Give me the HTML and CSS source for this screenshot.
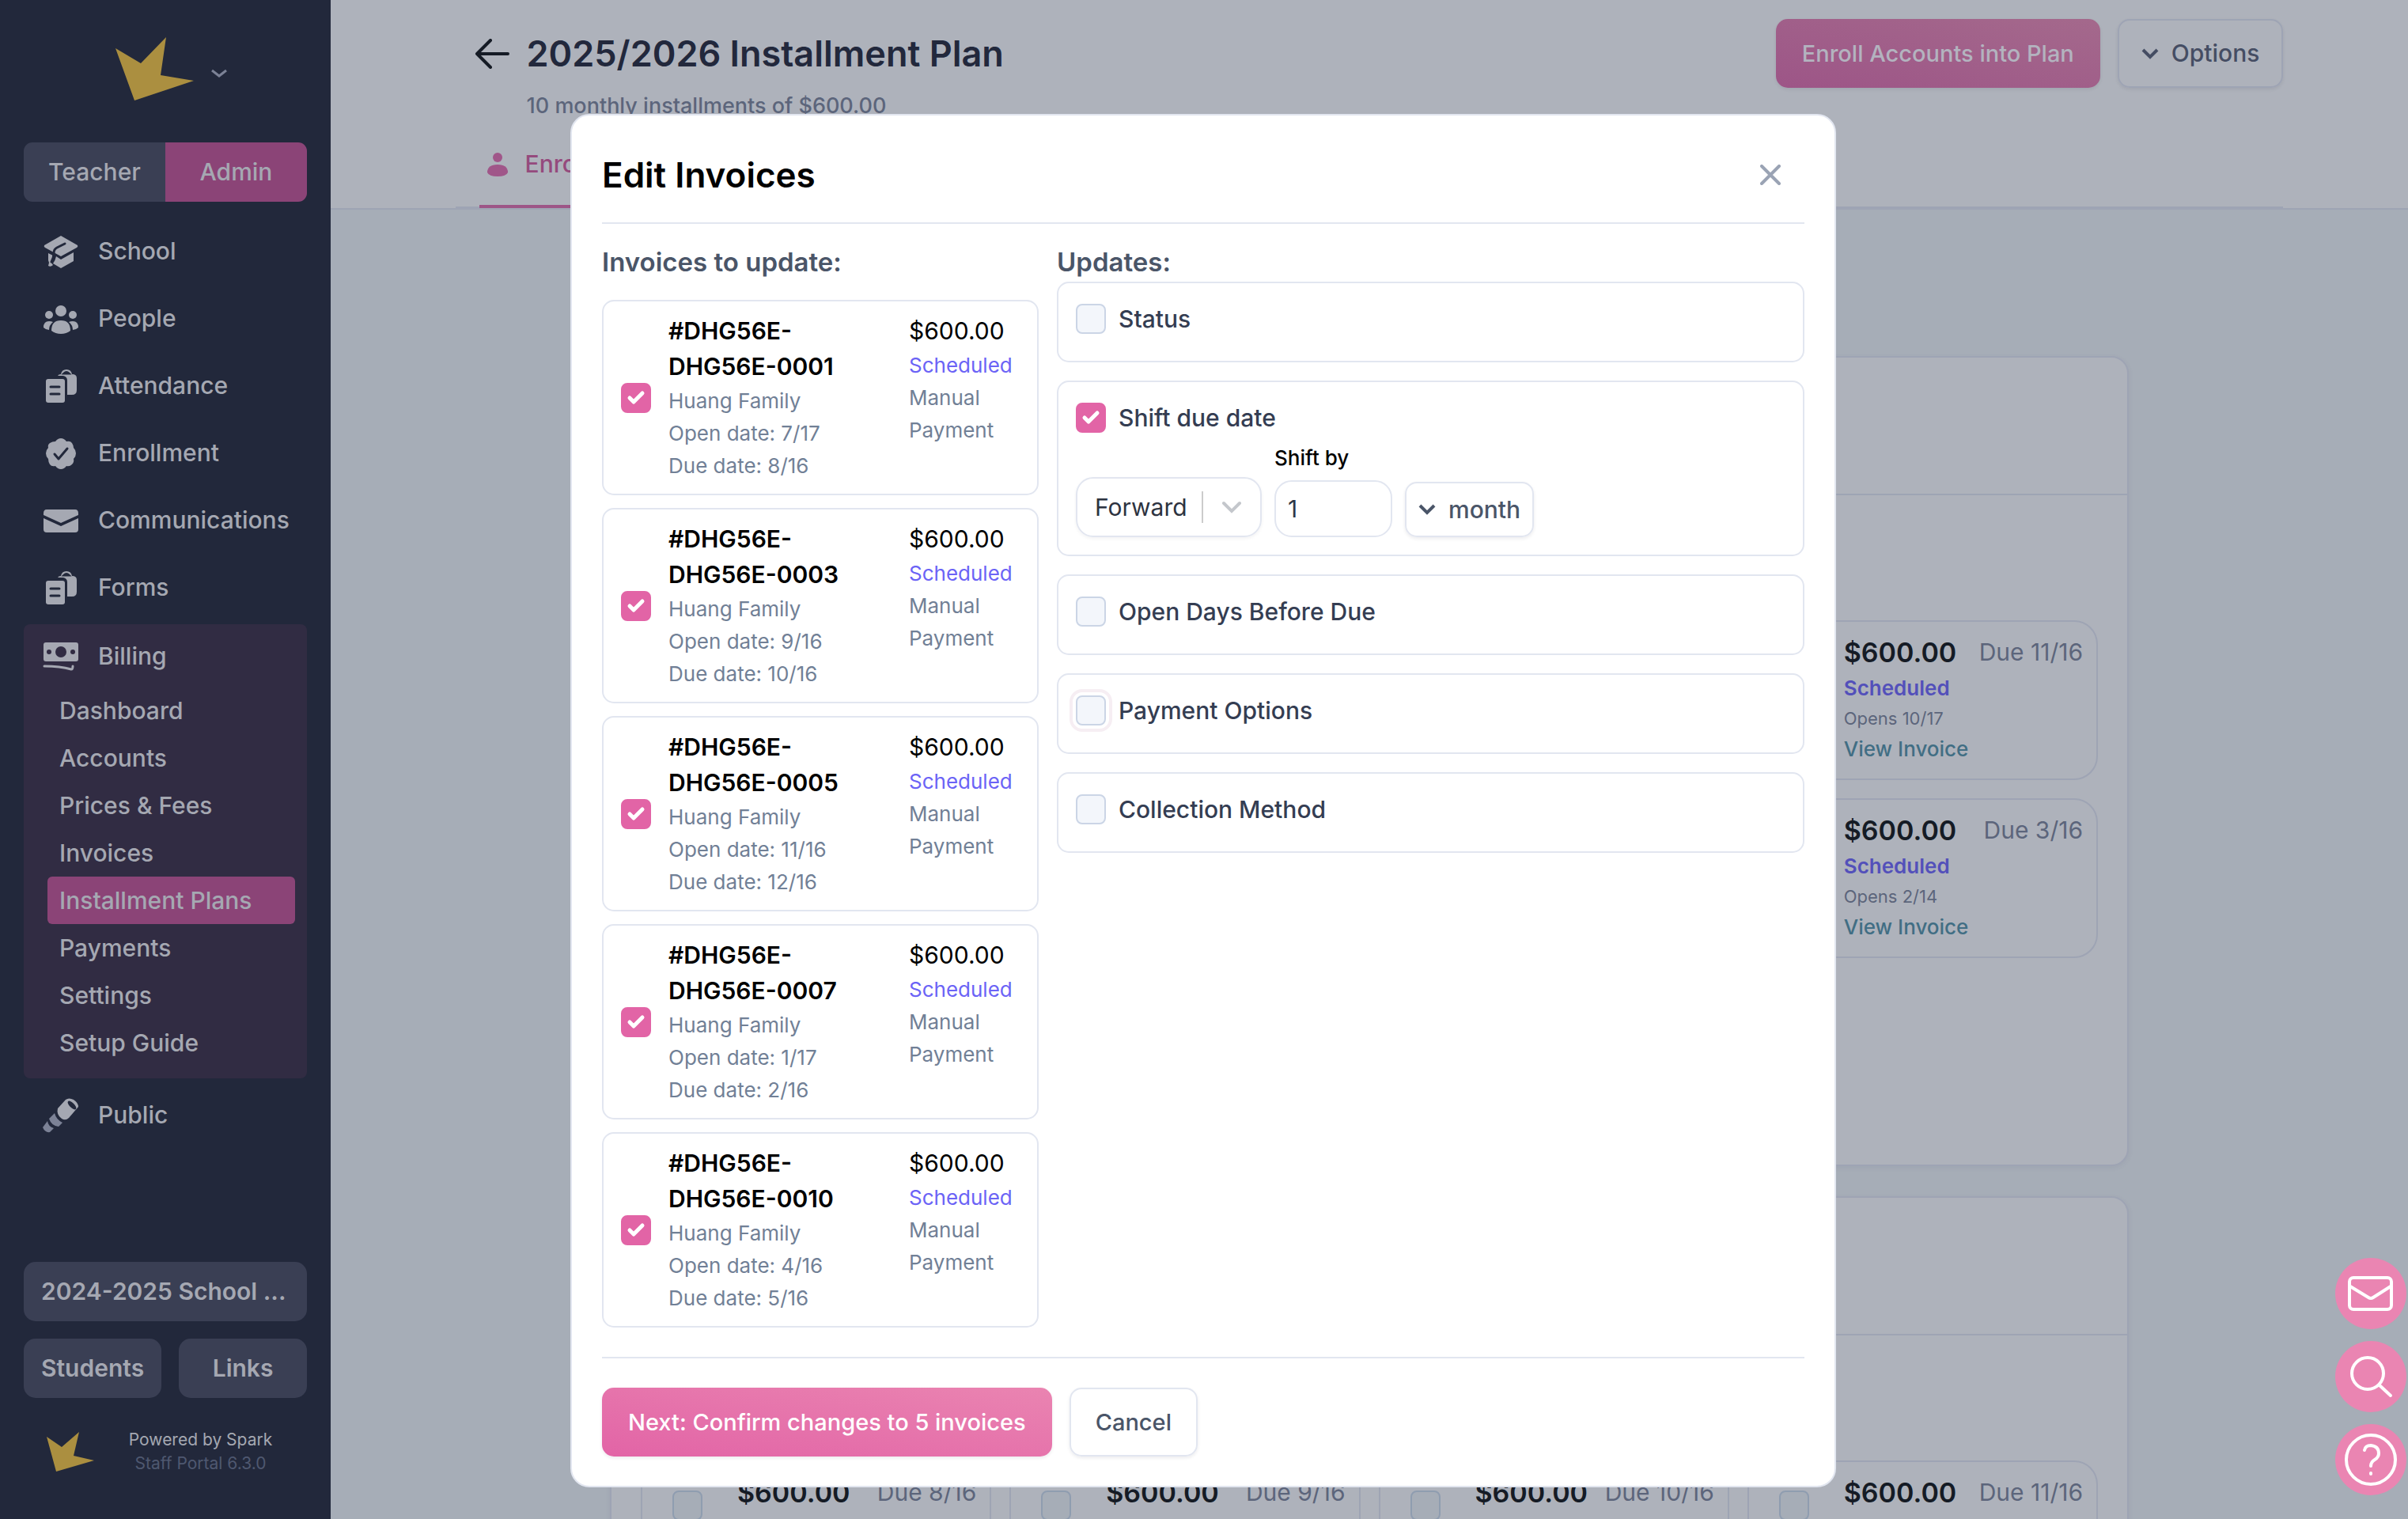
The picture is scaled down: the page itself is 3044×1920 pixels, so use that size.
FILE: index.html
```html
<!DOCTYPE html>
<html lang="en">
<head>
    <meta charset="UTF-8" />
    <meta name="viewport" content="width=device-width, initial-scale=1" />
    <title>2025/2026 Installment Plan</title>
    <link rel="stylesheet" href="styles.css">
</head>
<body>
    <aside class="sidebar">
        <button class="brand" aria-label="Switch school">
            <svg class="brand-logo" viewBox="0 0 100 80"><polygon points="1,14 33,33 65,0 58,48 100,55 25,80" fill="#ab8f40"/></svg>
            <svg class="brand-arrow" viewBox="0 0 20 12"><path d="M1 2l9 7 9-7" fill="none" stroke="#7c8296" stroke-width="3"/></svg>
        </button>

        <div class="role-switch">
            <button>Teacher</button>
            <button class="active">Admin</button>
        </div>

        <nav class="nav">
            <a class="nav-item" href="#">
                <svg viewBox="0 0 44 44">
                    <path d="M22 2L43 14Q44 16 42 17L22 28 2 17Q0 16 1 14z"/>
                    <path d="M16 28l6 4 16-9v11l-16 9-10-6q3-4 4-9zM6 24l6 3q0 5-3 8l3 4q-3 3-6 1l1-4-1-3z"/>
                    <path d="M27 12l-10 5q-4 2-4 7 0 6-3 11" fill="none" stroke="#22283b" stroke-width="3" stroke-linecap="round"/>
                </svg>
                School
            </a>
            <a class="nav-item" href="#">
                <svg viewBox="0 0 44 44">
                    <circle cx="22" cy="12" r="7"/><circle cx="7" cy="17" r="5"/><circle cx="37" cy="17" r="5"/>
                    <path d="M10 37q0-13 12-13t12 13q-5 4-12 4t-12-4zM0 33q0-8 7-8 3 0 5 1-5 4-5 10-4 0-7-3zM44 33q0-8-7-8-3 0-5 1 5 4 5 10 4 0 7-3z"/>
                </svg>
                People
            </a>
            <a class="nav-item" href="#">
                <svg viewBox="0 0 44 44">
                    <rect x="3" y="13" width="24" height="30" rx="3"/>
                    <path d="M18 9q1-2 4-2 1-6 7-6t7 6q6 0 6 5v15q0 6-6 6h-6V15q0-5-5-6z"/>
                    <path d="M26 6q3-3 6 0zM9 23h11M9 32h11" fill="none" stroke="#22283b" stroke-width="3" stroke-linecap="round"/>
                </svg>
                Attendance
            </a>
            <a class="nav-item" href="#">
                <svg viewBox="0 0 44 44">
                    <path d="M22 3q4 0 7 4 5-1 7 2t2 6q3 3 3 7t-3 7q1 4-2 7t-7 2q-3 4-7 4t-7-4q-5 1-7-2t-2-7q-3-3-3-7t3-7q-1-4 2-6t7-2q3-4 7-4z"/>
                    <path d="M14 23l5 6 11-13" fill="none" stroke="#22283b" stroke-width="3" stroke-linecap="round" stroke-linejoin="round"/>
                </svg>
                Enrollment
            </a>
            <a class="nav-item" href="#">
                <svg viewBox="0 0 44 44">
                    <path d="M4 8h36q4 0 4 5v2l-22 10L0 15v-2q0-5 4-5zM0 19l22 10 22-10v14q0 4-4 4H4q-4 0-4-4z"/>
                </svg>
                Communications
            </a>
            <a class="nav-item" href="#">
                <svg viewBox="0 0 44 44">
                    <rect x="3" y="13" width="24" height="30" rx="3"/>
                    <path d="M18 9q1-2 4-2 1-6 7-6t7 6q6 0 6 5v15q0 6-6 6h-6V15q0-5-5-6z"/>
                    <path d="M26 6q3-3 6 0zM9 23h11M9 32h11" fill="none" stroke="#22283b" stroke-width="3" stroke-linecap="round"/>
                </svg>
                Forms
            </a>
            <div class="nav-group">
                <a class="nav-item" href="#">
                    <svg viewBox="0 0 44 44">
                        <rect y="4" width="44" height="24" rx="3"/>
                        <path d="M1 34q20 0 34 4 2 0 2-4" fill="none" stroke="#a5a8b2" stroke-width="3" stroke-linecap="round"/>
                        <g fill="#312c43"><circle cx="22" cy="16" r="7"/><circle cx="7" cy="16" r="3"/><circle cx="37" cy="16" r="3"/></g>
                    </svg>
                    Billing
                </a>
                <a class="sub-item" href="#">Dashboard</a>
                <a class="sub-item" href="#">Accounts</a>
                <a class="sub-item" href="#">Prices &amp; Fees</a>
                <a class="sub-item" href="#">Invoices</a>
                <a class="sub-item active" href="#">Installment Plans</a>
                <a class="sub-item" href="#">Payments</a>
                <a class="sub-item" href="#">Settings</a>
                <a class="sub-item" href="#">Setup Guide</a>
            </div>
            <a class="nav-item" href="#">
                <svg viewBox="0 0 44 44">
                    <path d="M18 13L28 2q4-3 10 0 6 4 6 9l-12 14q-4 4-9 1-7-5-5-13z"/>
                    <ellipse cx="36" cy="9" rx="3" ry="7" transform="rotate(-45 36 9)" fill="#22283b"/>
                    <path d="M14 19q2 8 10 12l-5 5q-9-1-12-10zM5 29q1 7 8 9l-5 5q-6 1-9-6z" fill="#7c8296"/>
                </svg>
                Public
            </a>
        </nav>

        <div class="sidebar-bottom">
            <button class="side-btn year-btn">2024-2025 School ...</button>
            <div class="side-row">
                <button class="side-btn">Students</button>
                <button class="side-btn side-btn-grow">Links</button>
            </div>
            <div class="powered">
                <svg viewBox="0 0 60 50"><polygon points="0,6 19,19 41,0 34,30 60,36 12,50" fill="#ab8f40"/></svg>
                <div class="powered-text">
                    <div>Powered by Spark</div>
                    <div class="version">Staff Portal 6.3.0</div>
                </div>
            </div>
        </div>
    </aside>

    <main class="main">
        <header class="page-header">
            <div class="header-top">
                <a class="back" href="#" aria-label="Back">
                    <svg viewBox="0 0 44 38"><path d="M42 19H3M20 2L3 19l17 17" fill="none" stroke="#151b25" stroke-width="4" stroke-linecap="round" stroke-linejoin="round"/></svg>
                </a>
                <div class="header-text">
                    <h1>2025/2026 Installment Plan</h1>
                    <p>10 monthly installments of $600.00</p>
                </div>
                <div class="header-actions">
                    <button class="btn btn-primary-dim">Enroll Accounts into Plan</button>
                    <button class="btn btn-dim">
                        <svg viewBox="0 0 22 14"><path d="M2 2l9 9 9-9" fill="none" stroke="#454d63" stroke-width="4"/></svg>
                        Options
                    </button>
                </div>
            </div>
            <div class="tabs">
                <a class="tab" href="#">
                    <svg viewBox="0 0 26 30"><circle cx="13" cy="6" r="6"/><path d="M0 25q0-10 13-10t13 10q-2 5-13 5T0 25z"/></svg>
                    Enrolled
                </a>
            </div>
        </header>

        <div class="content">
            <section class="plan-card">
                <div class="plan-head"></div>
                <div class="installments">
                    <div class="installment"></div>
                    <div class="installment"></div>
                    <div class="installment"></div>
                    <div class="installment">
                        <input type="checkbox" aria-label="Select invoice due 11/16">
                        <div class="inst-body">
                            <div class="inst-top"><b>$600.00</b><span>Due 11/16</span></div>
                            <div class="inst-status">Scheduled</div>
                            <div class="inst-opens">Opens 10/17</div>
                            <a href="#">View Invoice</a>
                        </div>
                    </div>
                    <div class="installment"></div>
                    <div class="installment"></div>
                    <div class="installment"></div>
                    <div class="installment">
                        <input type="checkbox" aria-label="Select invoice due 3/16">
                        <div class="inst-body">
                            <div class="inst-top"><b>$600.00</b><span>Due 3/16</span></div>
                            <div class="inst-status">Scheduled</div>
                            <div class="inst-opens">Opens 2/14</div>
                            <a href="#">View Invoice</a>
                        </div>
                    </div>
                    <div class="installment"></div>
                    <div class="installment"></div>
                </div>
            </section>
            <section class="plan-card">
                <div class="plan-head"></div>
                <div class="installments">
                    <div class="installment">
                        <input type="checkbox" aria-label="Select invoice due 8/16">
                        <div class="inst-body">
                            <div class="inst-top"><b>$600.00</b><span>Due 8/16</span></div>
                        </div>
                    </div>
                    <div class="installment">
                        <input type="checkbox" aria-label="Select invoice due 9/16">
                        <div class="inst-body">
                            <div class="inst-top"><b>$600.00</b><span>Due 9/16</span></div>
                        </div>
                    </div>
                    <div class="installment">
                        <input type="checkbox" aria-label="Select invoice due 10/16">
                        <div class="inst-body">
                            <div class="inst-top"><b>$600.00</b><span>Due 10/16</span></div>
                        </div>
                    </div>
                    <div class="installment">
                        <input type="checkbox" aria-label="Select invoice due 11/16">
                        <div class="inst-body">
                            <div class="inst-top"><b>$600.00</b><span>Due 11/16</span></div>
                        </div>
                    </div>
                </div>
            </section>
        </div>
    </main>

    <div class="overlay">
        <div class="modal" role="dialog" aria-labelledby="modal-title">
            <div class="modal-head">
                <h2 id="modal-title">Edit Invoices</h2>
                <button class="close" aria-label="Close">
                    <svg viewBox="0 0 26 26"><path d="M2 2l22 22M24 2L2 24" fill="none" stroke="#9aa3b4" stroke-width="4" stroke-linecap="round"/></svg>
                </button>
            </div>
            <div class="modal-body">
                <section class="invoices">
                    <h3>Invoices to update:</h3>
                    <div class="invoice-list">
                        <label class="invoice">
                            <input type="checkbox" checked>
                            <span class="inv-main"><span class="inv-id">#DHG56E-DHG56E-0001</span><span>Huang Family</span><span>Open date: 7/17</span><span>Due date: 8/16</span></span>
                            <span class="inv-side"><span class="inv-amount">$600.00</span><span class="inv-status">Scheduled</span><span>Manual Payment</span></span>
                        </label>
                        <label class="invoice">
                            <input type="checkbox" checked>
                            <span class="inv-main"><span class="inv-id">#DHG56E-DHG56E-0003</span><span>Huang Family</span><span>Open date: 9/16</span><span>Due date: 10/16</span></span>
                            <span class="inv-side"><span class="inv-amount">$600.00</span><span class="inv-status">Scheduled</span><span>Manual Payment</span></span>
                        </label>
                        <label class="invoice">
                            <input type="checkbox" checked>
                            <span class="inv-main"><span class="inv-id">#DHG56E-DHG56E-0005</span><span>Huang Family</span><span>Open date: 11/16</span><span>Due date: 12/16</span></span>
                            <span class="inv-side"><span class="inv-amount">$600.00</span><span class="inv-status">Scheduled</span><span>Manual Payment</span></span>
                        </label>
                        <label class="invoice">
                            <input type="checkbox" checked>
                            <span class="inv-main"><span class="inv-id">#DHG56E-DHG56E-0007</span><span>Huang Family</span><span>Open date: 1/17</span><span>Due date: 2/16</span></span>
                            <span class="inv-side"><span class="inv-amount">$600.00</span><span class="inv-status">Scheduled</span><span>Manual Payment</span></span>
                        </label>
                        <label class="invoice">
                            <input type="checkbox" checked>
                            <span class="inv-main"><span class="inv-id">#DHG56E-DHG56E-0010</span><span>Huang Family</span><span>Open date: 4/16</span><span>Due date: 5/16</span></span>
                            <span class="inv-side"><span class="inv-amount">$600.00</span><span class="inv-status">Scheduled</span><span>Manual Payment</span></span>
                        </label>
                    </div>
                </section>
                <section class="updates">
                    <h3>Updates:</h3>
                    <div class="update-list">
                        <div class="update"><label class="update-label"><input type="checkbox">Status</label></div>
                        <div class="update">
                            <label class="update-label"><input type="checkbox" checked>Shift due date</label>
                            <div class="shift-row">
                                <div class="direction">
                                    <select aria-label="Direction"><option>Forward</option><option>Backward</option></select>
                                    <span class="direction-sep"></span>
                                    <svg viewBox="0 0 24 16"><path d="M2 3l10 10L22 3" fill="none" stroke="#c4c7cc" stroke-width="4" stroke-linecap="round"/></svg>
                                </div>
                                <div class="amount">
                                    <label for="shift-by">Shift by</label>
                                    <input type="text" id="shift-by" value="1">
                                </div>
                                <button class="unit">
                                    <svg viewBox="0 0 22 14"><path d="M2 2l9 9 9-9" fill="none" stroke="#4a5568" stroke-width="4"/></svg>
                                    month
                                </button>
                            </div>
                        </div>
                        <div class="update"><label class="update-label"><input type="checkbox">Open Days Before Due</label></div>
                        <div class="update"><label class="update-label"><input type="checkbox" class="focused">Payment Options</label></div>
                        <div class="update"><label class="update-label"><input type="checkbox">Collection Method</label></div>
                    </div>
                </section>
            </div>
            <div class="modal-foot">
                <button class="btn btn-primary">Next: Confirm changes to 5 invoices</button>
                <button class="btn btn-plain">Cancel</button>
            </div>
        </div>
    </div>

    <div class="fabs">
        <button class="fab" aria-label="Messages">
            <svg viewBox="0 0 90 90"><rect x="18" y="25" width="53" height="40" rx="5"/><path d="M19 36l23 14q3 2 6 0l22-14"/></svg>
        </button>
        <button class="fab" aria-label="Search">
            <svg viewBox="0 0 90 90"><circle cx="41" cy="41" r="20"/><path d="M56 56l14 13"/></svg>
        </button>
        <button class="fab" aria-label="Help">
            <svg viewBox="0 0 90 90"><circle cx="45" cy="45" r="31"/><path d="M37 33q1-6 8-6 10 1 10 10 0 5-5 8t-5 8v0M45 62v1"/></svg>
        </button>
    </div>
</body>
</html>
```

FILE: styles.css
```css
* {
    box-sizing: border-box;
}
body {
    margin: 0;
    height: 100vh;
    display: flex;
    overflow: hidden;
    font-family: Inter, "Liberation Sans", sans-serif;
    font-size: 30px;
    line-height: 45px;
    background: #a6adb7;
    color: #151b25;
}
button, input, select {
    font: inherit;
    color: inherit;
    margin: 0;
}
button {
    border: none;
    background: none;
    padding: 0;
    cursor: pointer;
}
a {
    color: inherit;
    text-decoration: none;
}
h1, h2, h3, p {
    margin: 0;
}

/* Sidebar */
.sidebar {
    flex: 0 0 418px;
    display: flex;
    flex-direction: column;
    padding: 47px 30px 55px;
    background: #22283b;
    color: #a5a8b2;
    font-weight: 500;
}
.brand {
    display: flex;
    justify-content: center;
    align-items: center;
    gap: 22px;
    height: 80px;
    padding-left: 14px;
    margin-bottom: 53px;
}
.brand-logo {
    width: 100px;
    height: 80px;
}
.brand-arrow {
    width: 20px;
    height: 12px;
    margin-top: 12px;
}
.role-switch {
    display: flex;
    height: 75px;
    margin-bottom: 24px;
    border-radius: 11px;
    overflow: hidden;
}
.role-switch button {
    flex: 1;
    background: #3a3f54;
}
.role-switch .active {
    background: #8b4477;
}
.nav {
    display: flex;
    flex-direction: column;
    gap: 8px;
}
.nav-item {
    display: flex;
    align-items: center;
    gap: 25px;
    height: 77px;
    padding-left: 25px;
}
.nav-item svg {
    width: 44px;
    height: 44px;
    fill: #a5a8b2;
    overflow: visible;
}
.nav-group {
    padding: 2px 0 15px;
    border-radius: 8px;
    background: #312c43;
}
.sub-item {
    display: block;
    height: 60px;
    line-height: 60px;
    margin: 0 15px 0 30px;
    padding-left: 15px;
    border-radius: 6px;
}
.sub-item.active {
    background: #8b4477;
}
.sidebar-bottom {
    margin-top: auto;
}
.side-btn {
    height: 75px;
    padding: 0 22px;
    border-radius: 15px;
    background: #3a3f54;
    font-weight: 600;
    text-align: left;
}
.year-btn {
    width: 100%;
}
.side-row {
    display: flex;
    gap: 22px;
    margin: 22px 0 38px;
}
.side-btn-grow {
    flex: 1;
    text-align: center;
}
.powered {
    display: flex;
    align-items: center;
    padding-left: 29px;
}
.powered svg {
    width: 60px;
    height: 50px;
}
.powered-text {
    flex: 1;
    font-size: 21px;
    line-height: 30px;
    font-weight: 400;
    text-align: center;
}
.version {
    color: #4f5870;
}

/* Page header */
.main {
    flex: 1;
    min-width: 0;
    overflow: hidden;
}
.page-header {
    padding: 24px 6% 0;
    background: #aeb2bb;
    border-bottom: 2px solid #9ea4b4;
}
.header-top {
    display: flex;
    padding-left: 24px;
}
.back {
    width: 44px;
    height: 88px;
    display: flex;
    align-items: center;
    margin-right: 22px;
}
.back svg {
    width: 44px;
    height: 38px;
}
.header-text {
    flex: 1;
}
.header-text h1 {
    font-size: 45px;
    line-height: 88px;
    font-weight: 600;
    color: #22283c;
}
.header-text p {
    font-size: 27px;
    line-height: 44px;
    font-weight: 500;
    color: #5c657b;
}
.header-actions {
    display: flex;
    gap: 22px;
}
.btn {
    display: flex;
    align-items: center;
    justify-content: center;
    gap: 16px;
    height: 87px;
    padding: 0 31px;
    border: 2px solid transparent;
    border-radius: 15px;
    font-size: 29px;
    font-weight: 500;
    box-shadow: 0 2px 4px rgba(0, 0, 40, 0.08);
}
.btn svg, .unit svg {
    width: 22px;
    height: 14px;
}
.btn-primary-dim {
    padding: 0 33px;
    border: none;
    background: linear-gradient(to top right, #9d5587, #a4698c);
    color: #b3b3bf;
}
.btn-dim {
    padding: 0 28px;
    border-color: #9ea4b4;
    font-size: 30px;
    color: #454d63;
}
.tabs {
    display: flex;
    border-bottom: 2px solid #9ea4b4;
}
.tab {
    display: flex;
    align-items: center;
    gap: 22px;
    height: 107px;
    margin: 0 30px -2px;
    padding: 0 10px;
    border-bottom: 4px solid #9d5587;
    color: #954a7d;
    font-weight: 500;
}
.tab svg {
    width: 26px;
    height: 30px;
    fill: #a05689;
}

/* Installments behind the dialog */
.content {
    max-width: 1920px;
    margin: 185px auto 0;
}
.plan-card {
    margin-bottom: 38px;
    border: 2px solid #9ea4b4;
    border-radius: 22px;
    background: #aeb2bb;
    box-shadow: 0 2px 6px rgba(60, 60, 120, 0.08);
}
.plan-head {
    height: 174px;
    border-bottom: 2px solid #9ea4b4;
}
.installments {
    display: grid;
    grid-template-columns: repeat(4, 1fr);
    gap: 23px;
    padding: 158px 37px 36px;
}
.installment {
    display: flex;
    height: 202px;
    padding: 16px 17px 0 38px;
    border: 2px solid #9ea4b4;
    border-radius: 30px;
}
.inst-body {
    flex: 1;
}
.inst-body a {
    display: block;
    font-size: 26px;
    line-height: 46px;
    font-weight: 500;
    color: #416e84;
}
.inst-top {
    display: flex;
    justify-content: space-between;
}
.inst-top b {
    font-size: 34px;
    font-weight: 600;
}
.inst-top span {
    color: #5c657b;
}
.inst-status {
    font-size: 26px;
    line-height: 45px;
    font-weight: 600;
    color: #5350ba;
}
.inst-opens {
    font-size: 22px;
    line-height: 32px;
    color: #5c657b;
}

/* Checkboxes */
input[type="checkbox"] {
    appearance: none;
    flex: none;
    width: 38px;
    height: 38px;
    border: 2px solid #cbd5e6;
    border-radius: 8px;
    background: #f3f6fb;
}
input[type="checkbox"]:checked {
    border-color: #e264a6;
    background: #e264a6 url("data:image/svg+xml,%3Csvg xmlns='http://www.w3.org/2000/svg' viewBox='0 0 34 34'%3E%3Cpath d='M9 17l5 5 11-11' fill='none' stroke='white' stroke-width='5' stroke-linecap='round' stroke-linejoin='round'/%3E%3C/svg%3E") center / contain;
}
input[type="checkbox"].focused {
    outline: 4px solid #f6eef3;
    outline-offset: 4px;
}
.installment input[type="checkbox"] {
    margin: 20px 44px 0 0;
    border-color: #8f9db0;
    background: #a6adb7;
}

/* Dialog */
.overlay {
    position: fixed;
    inset: 0;
    display: flex;
    justify-content: center;
    align-items: flex-start;
    padding: 144px 42px 40px 40px;
}
.modal {
    width: 100%;
    max-width: 1600px;
    padding: 0 38px;
    border: 2px solid #e2e6f0;
    border-radius: 24px;
    background: #fff;
    color: #000;
}
.modal-head {
    display: flex;
    justify-content: space-between;
    align-items: center;
    height: 137px;
    padding: 15px 30px 0 0;
    border-bottom: 2px solid #e2e6f0;
}
.modal-head h2 {
    font-size: 44px;
    font-weight: 600;
}
.close svg {
    display: block;
    width: 26px;
    height: 26px;
}
.modal-body {
    display: grid;
    grid-template-columns: 552px 1fr;
    gap: 23px;
    padding: 23px 0 37px;
}
.modal-body h3 {
    font-size: 33px;
    line-height: 50px;
    font-weight: 600;
    color: #4a5568;
}
.invoice-list {
    display: flex;
    flex-direction: column;
    gap: 16px;
    margin-top: 23px;
}
.invoice {
    display: flex;
    align-items: center;
    gap: 22px;
    padding: 15px 22px;
    border: 2px solid #e2e6f0;
    border-radius: 15px;
    font-size: 26px;
    line-height: 41px;
    color: #718096;
}
.inv-main {
    flex: 1;
}
.inv-side {
    flex: 0 0 140px;
    align-self: flex-start;
}
.inv-main span, .inv-side span {
    display: block;
}
.inv-main .inv-id, .inv-side .inv-amount {
    font-size: 30px;
    line-height: 45px;
    color: #000;
}
.inv-main .inv-id {
    font-weight: 600;
}
.inv-side .inv-status {
    color: #6b63f6;
}
.update-list {
    display: flex;
    flex-direction: column;
    gap: 23px;
}
.update {
    padding: 22px;
    border: 2px solid #e2e6f0;
    border-radius: 15px;
}
.update-label {
    display: flex;
    align-items: center;
    gap: 16px;
    height: 46px;
    margin-bottom: 8px;
    font-weight: 500;
    color: #343d52;
}
.shift-row {
    display: flex;
    align-items: flex-end;
    gap: 16px;
}
.direction {
    display: flex;
    align-items: center;
    width: 235px;
    height: 76px;
    padding: 0 24px 0 22px;
    border: 2px solid #e2e6f0;
    border-radius: 22px;
    box-shadow: 0 2px 4px rgba(0, 0, 40, 0.05);
}
.direction select {
    appearance: none;
    flex: 1;
    min-width: 0;
    padding: 0;
    border: none;
    background: none;
    color: #2d3340;
}
.direction-sep {
    width: 2px;
    height: 40px;
    margin-right: 24px;
    background: #ccc;
}
.direction svg {
    width: 24px;
    height: 16px;
}
.amount label {
    display: block;
    font-size: 26px;
    line-height: 40px;
    margin-bottom: 8px;
    font-weight: 500;
}
.amount input {
    display: block;
    width: 149px;
    height: 72px;
    padding: 0 15px;
    border: 2px solid #e2e6f0;
    border-radius: 22px;
    color: #2d3748;
}
.unit {
    display: flex;
    align-items: center;
    gap: 16px;
    height: 70px;
    padding: 0 15px;
    border: 2px solid #e2e6f0;
    border-radius: 15px;
    font-weight: 500;
    color: #4a5568;
    box-shadow: 0 2px 4px rgba(0, 0, 40, 0.08);
}
.modal-foot {
    display: flex;
    gap: 22px;
    padding: 37px 0;
    border-top: 2px solid #e2e6f0;
}
.btn-primary {
    padding: 0 33px;
    border: none;
    background: linear-gradient(to top right, #e264a6, #ea84b1);
    color: #fff;
}
.btn-plain {
    border-color: #e2e6f0;
    color: #4a5568;
}

/* Floating buttons */
.fabs {
    position: fixed;
    right: 2px;
    bottom: 30px;
    display: flex;
    flex-direction: column;
    gap: 15px;
}
.fab {
    width: 90px;
    height: 90px;
    border-radius: 50%;
    background: #ea85b2;
}
.fab svg {
    display: block;
    fill: none;
    stroke: #fff;
    stroke-width: 4;
    stroke-linecap: round;
    stroke-linejoin: round;
}
```
